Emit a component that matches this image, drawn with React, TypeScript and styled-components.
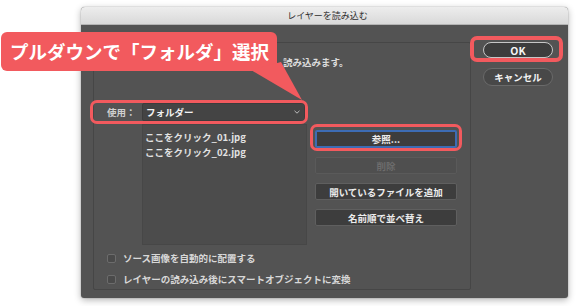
import styled, { createGlobalStyle } from 'styled-components'

const RED = '#f25a5e'

const GlobalStyle = createGlobalStyle`
  html, body {
    margin: 0;
    background: #ffffff;
  }
  body {
    font-family: "Noto Sans CJK JP", "Noto Sans", sans-serif;
    -webkit-font-smoothing: antialiased;
  }
`

const Page = styled.div`
  position: relative;
  width: 576px;
  height: 306px;
  overflow: hidden;
  box-sizing: border-box;
  padding: 7px 0 0 81px;
`

const Window = styled.div`
  width: 487px;
  height: 291px;
  display: flex;
  flex-direction: column;
  background: #535353;
  border-radius: 4px 4px 3px 3px;
  box-shadow: 0 0 0 1px rgba(0, 0, 0, 0.06), 0 2px 7px rgba(0, 0, 0, 0.3);
  overflow: hidden;
`

const TitleBar = styled.div`
  flex: none;
  height: 18px;
  box-sizing: border-box;
  padding-left: 6px;
  background: linear-gradient(#ededed, #d9d9d9);
  border-bottom: 1px solid #b4b4b4;
  display: flex;
  align-items: center;
  justify-content: center;
  font-size: 9px;
  color: #2e2e2e;
`

const Body = styled.div`
  flex: 1;
  display: flex;
  padding: 17px 0 8px 12px;
`

const Panel = styled.div`
  width: 378px;
  height: 248px;
  box-sizing: border-box;
  border: 1px solid #464646;
  border-radius: 2px;
  padding-left: 13px;
  display: flex;
  flex-direction: column;
  font-size: 9.5px;
  font-weight: 600;
  color: #dcdcdc;
`

// the start of this sentence sits under the callout, only its tail shows
const Description = styled.div`
  margin-top: 12px;
  padding-left: 176px;
  line-height: 14px;
  white-space: nowrap;
`

const Marked = styled.div<{ $t: number; $r: number; $b: number; $l: number; $w: number }>`
  position: relative;
  &::after {
    content: '';
    position: absolute;
    top: ${(p) => -p.$t}px;
    right: ${(p) => -p.$r}px;
    bottom: ${(p) => -p.$b}px;
    left: ${(p) => -p.$l}px;
    border: ${(p) => p.$w}px solid ${RED};
    border-radius: 7px;
    pointer-events: none;
  }
`

const FieldRow = styled(Marked)`
  margin-top: 34px;
  display: flex;
  align-items: center;
  width: 198px;
`

const FieldLabel = styled.span`
  width: 35px;
  color: #d0d0d0;
`

const Select = styled.div`
  width: 163px;
  height: 18px;
  box-sizing: border-box;
  background: #444444;
  border: 1px solid #3c3c3c;
  border-radius: 2px;
  display: flex;
  align-items: center;
  justify-content: space-between;
  padding: 0 4px 0 3px;
  color: #f2f2f2;
  font-weight: 700;
`

const ContentRow = styled.div`
  margin-top: 3px;
  display: flex;
`

const FileList = styled.div`
  margin-left: 35px;
  width: 165px;
  height: 121px;
  box-sizing: border-box;
  background: #4c4c4c;
  border: 1px solid #474747;
  padding: 5px 0 0 2px;
  display: flex;
  flex-direction: column;
`

const FileItem = styled.div`
  line-height: 15px;
  color: #e2e2e2;
  white-space: nowrap;
`

const ButtonColumn = styled.div`
  margin-left: 8px;
  width: 142px;
  padding-top: 6px;
  display: flex;
  flex-direction: column;
  gap: 9px;
`

type Variant = 'focus' | 'disabled' | 'normal'

const Button = styled.div<{ $variant?: Variant }>`
  height: ${(p) => (p.$variant === 'focus' ? 18 : 17)}px;
  box-sizing: border-box;
  display: flex;
  align-items: center;
  justify-content: center;
  border-radius: 2px;
  font-weight: 700;
  white-space: nowrap;
  background: ${(p) => (p.$variant === 'disabled' ? '#4f4f4f' : '#3d3d3d')};
  border: ${(p) =>
    p.$variant === 'focus'
      ? '2px solid #3d6cb4'
      : p.$variant === 'disabled'
      ? '1px solid #5a5a5a'
      : '1px solid #5f5f5f'};
  color: ${(p) => (p.$variant === 'disabled' ? '#6c6c6c' : '#ececec')};
`

const FocusMark = styled(Marked)`
  display: flex;
  flex-direction: column;
`

const CheckRow = styled.label<{ $gap: number }>`
  margin-top: ${(p) => p.$gap}px;
  display: flex;
  align-items: center;
  gap: 7px;
  line-height: 14px;
  color: #d8d8d8;
  white-space: nowrap;
`

const CheckBox = styled.span`
  width: 9px;
  height: 9px;
  box-sizing: border-box;
  border: 1px solid #6c6c6c;
  border-radius: 2px;
  background: #4a4a4a;
`

const Side = styled.div`
  margin-left: 12px;
  width: 70px;
  display: flex;
  flex-direction: column;
  gap: 10px;
`

const Pill = styled.div<{ $primary?: boolean }>`
  height: ${(p) => (p.$primary ? 16 : 18)}px;
  box-sizing: border-box;
  border-radius: 9px;
  display: flex;
  align-items: center;
  justify-content: center;
  font-size: ${(p) => (p.$primary ? 10.5 : 9.5)}px;
  font-weight: 700;
  color: #f4f4f4;
  background: ${(p) => (p.$primary ? '#3d3d3d' : '#484848')};
  border: 1px solid ${(p) => (p.$primary ? '#c6c6c6' : '#6a6a6a')};
`

const Callout = styled.div`
  position: absolute;
  left: 1px;
  top: 32px;
  width: 276px;
  height: 39px;
  border-radius: 6px;
  background: ${RED};
  color: #ffffff;
  font-size: 18.5px;
  font-weight: 700;
  line-height: 39px;
  padding-left: 9px;
  box-sizing: border-box;
  white-space: nowrap;
`

const Tail = styled.svg`
  position: absolute;
  left: 0;
  top: 0;
  overflow: visible;
`

const Chevron = () => (
  <svg width="6" height="4" viewBox="0 0 6 4">
    <polyline points="0.5,0.8 3,3.2 5.5,0.8" fill="none" stroke="#bdbdbd" strokeWidth="1" />
  </svg>
)

export default function App() {
  return (
    <>
      <GlobalStyle />
      <Page>
        <Window>
          <TitleBar>レイヤーを読み込む</TitleBar>
          <Body>
            <Panel>
              <Description>読み込みます。</Description>
              <FieldRow $t={3} $r={3} $b={3} $l={17} $w={3.5}>
                <FieldLabel>使用：</FieldLabel>
                <Select>
                  <span>フォルダー</span>
                  <Chevron />
                </Select>
              </FieldRow>
              <ContentRow>
                <FileList>
                  <FileItem>ここをクリック_01.jpg</FileItem>
                  <FileItem>ここをクリック_02.jpg</FileItem>
                </FileList>
                <ButtonColumn>
                  <FocusMark $t={6} $r={5} $b={3} $l={5} $w={3.5}>
                    <Button $variant="focus">参照...</Button>
                  </FocusMark>
                  <Button $variant="disabled">削除</Button>
                  <Button>開いているファイルを追加</Button>
                  <Button>名前順で並べ替え</Button>
                </ButtonColumn>
              </ContentRow>
              <CheckRow $gap={6}>
                <CheckBox />
                ソース画像を自動的に配置する
              </CheckRow>
              <CheckRow $gap={7}>
                <CheckBox />
                レイヤーの読み込み後にスマートオブジェクトに変換
              </CheckRow>
            </Panel>
            <Side>
              <Marked $t={6} $r={10} $b={4} $l={13} $w={4}>
                <Pill $primary>OK</Pill>
              </Marked>
              <Pill>キャンセル</Pill>
            </Side>
          </Body>
        </Window>
        <Callout>
          プルダウンで「フォルダ」選択
          <Tail width="1" height="1">
            <polygon points="250,38 280,30 301,68" fill={RED} />
          </Tail>
        </Callout>
      </Page>
    </>
  )
}
